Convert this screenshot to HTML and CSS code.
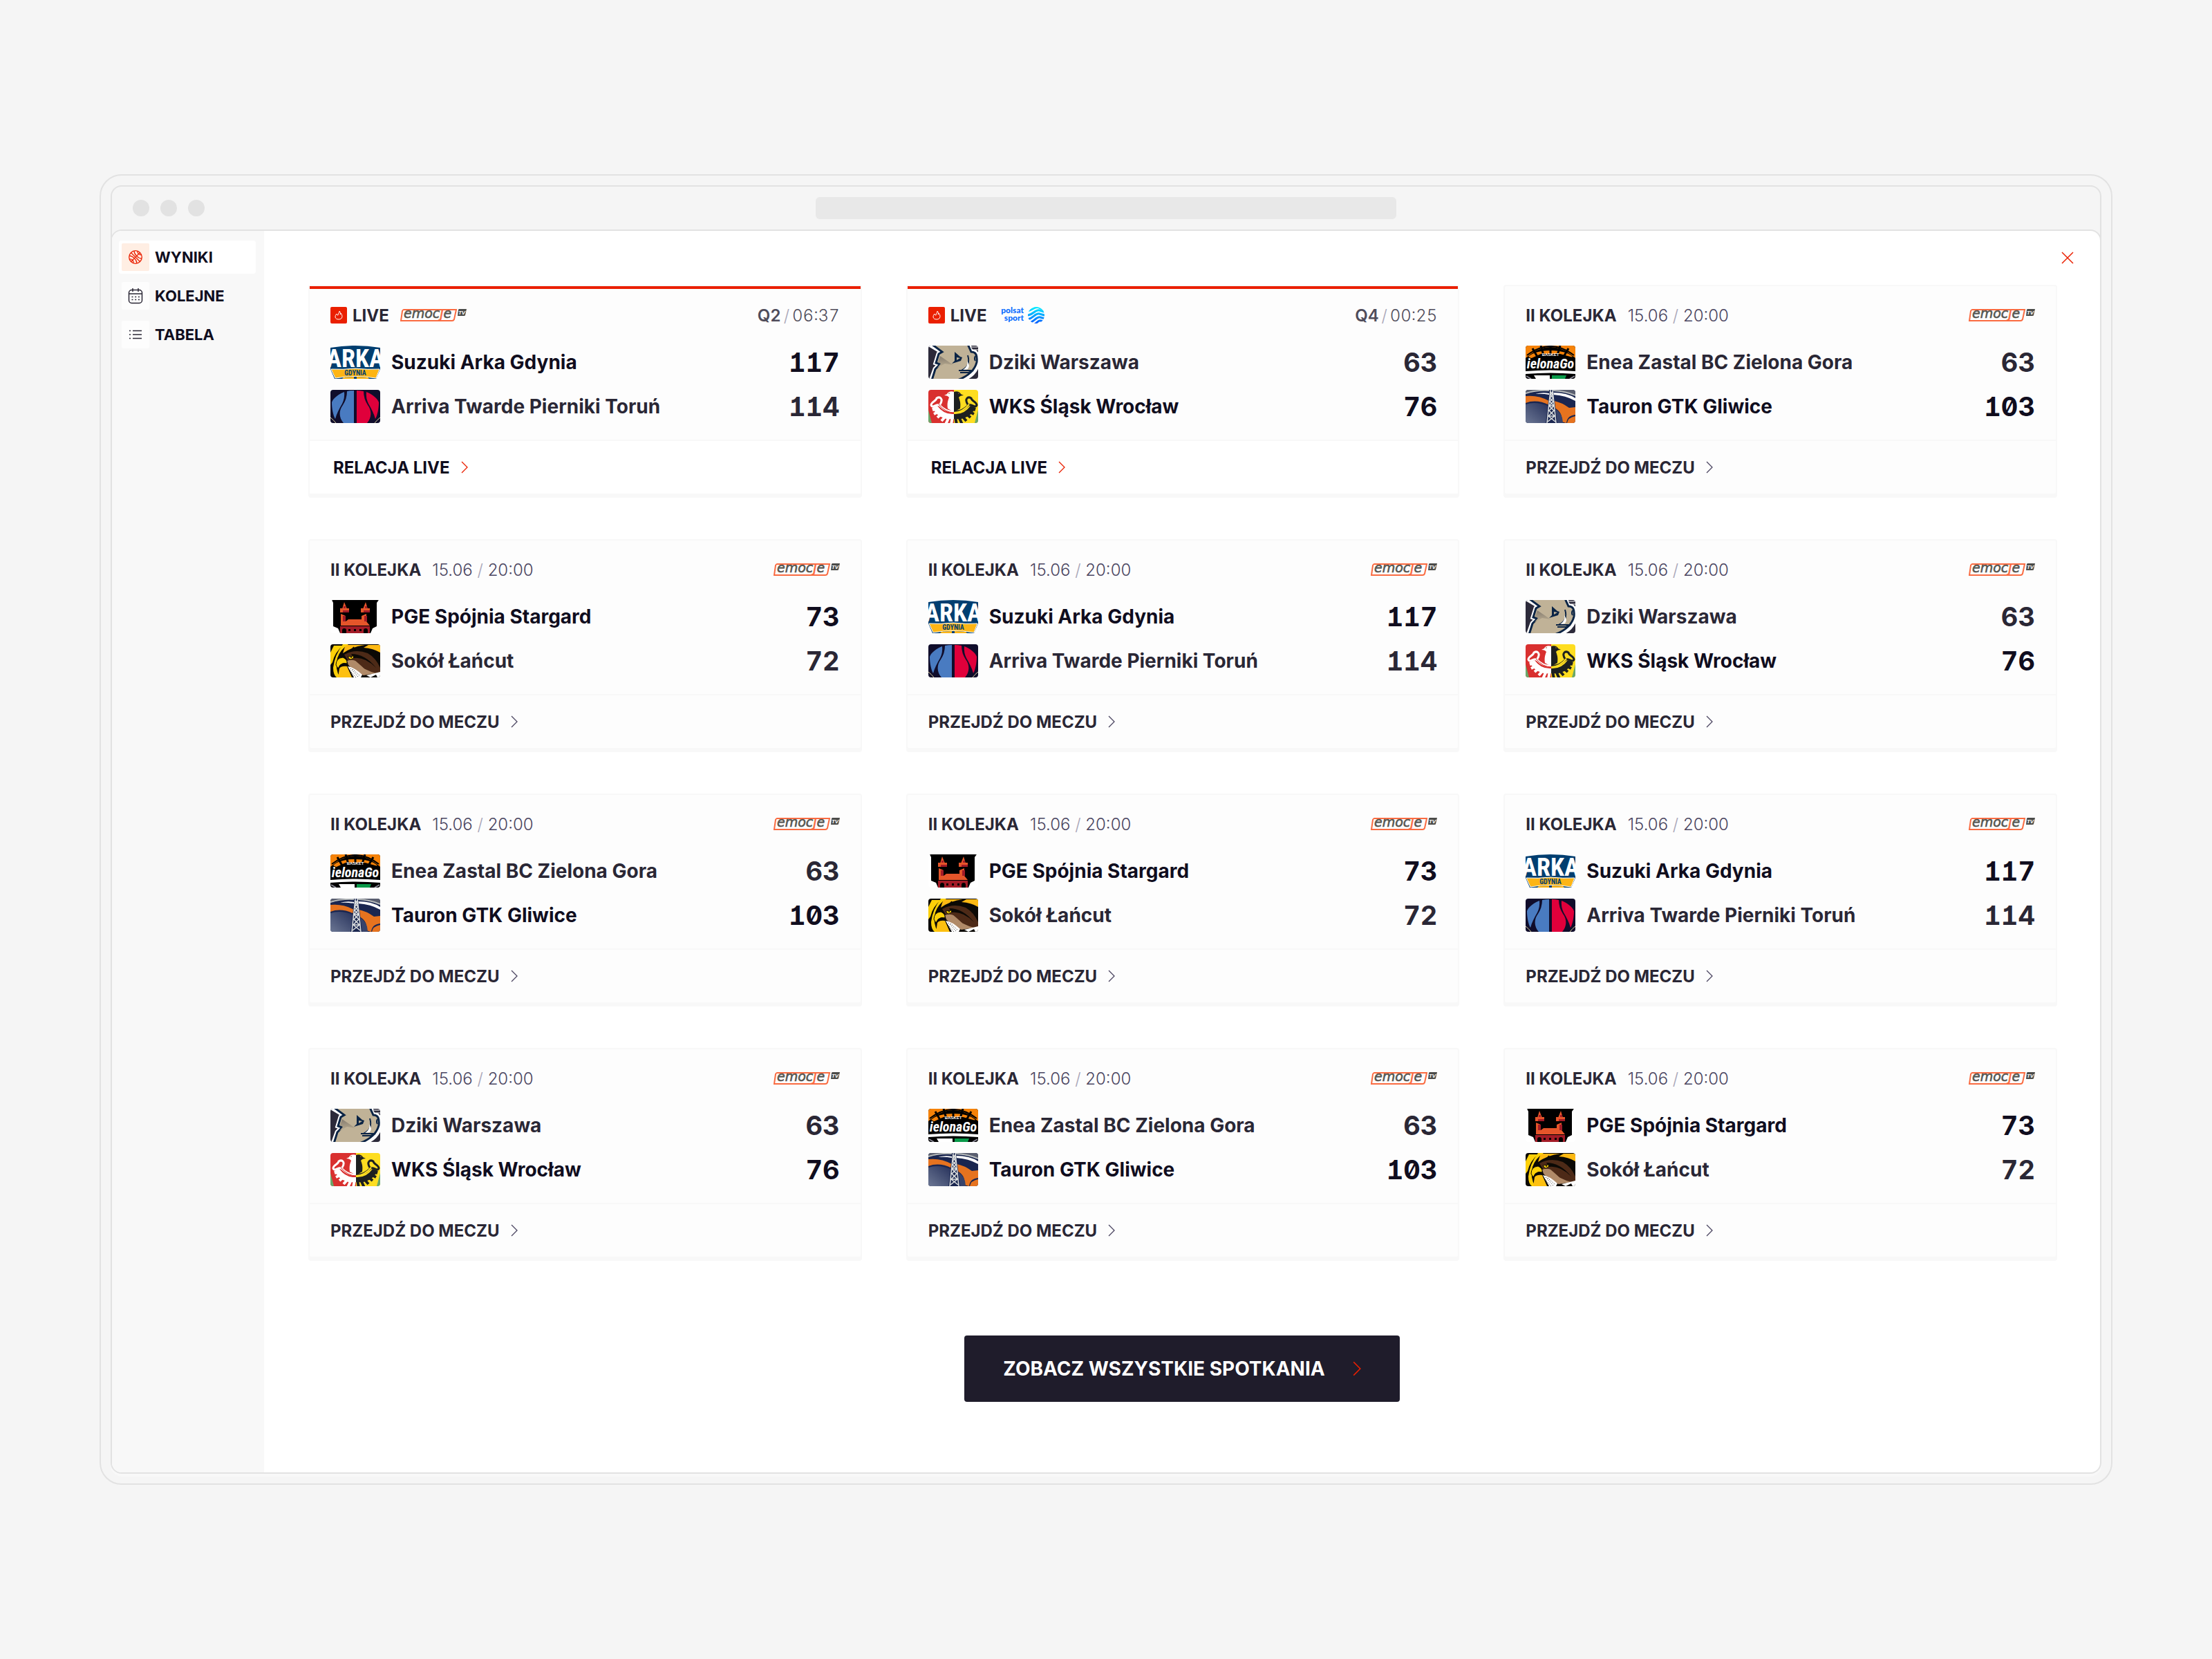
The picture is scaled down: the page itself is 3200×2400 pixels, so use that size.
FILE: index.html
```html
<!DOCTYPE html>
<html lang="pl">
<head>
    <meta charset="UTF-8">
    <meta name="viewport" content="width=device-width, initial-scale=1.0">
    <link rel="stylesheet" href="styles.css">
    <title>Wyniki</title>
</head>
<body>
    <!-- Shared drawings: team crests and broadcaster logos -->
    <svg class="sprite" aria-hidden="true">
      <defs>
        <linearGradient id="fur-shade" x1="0" y1="0" x2="0" y2="1">
          <stop offset="0" stop-color="#857c70"/>
          <stop offset="1" stop-color="#bcae92"/>
        </linearGradient>
        <linearGradient id="steel" x1="1" y1="0" x2="0" y2="1">
          <stop offset="0" stop-color="#25305a"/>
          <stop offset="1" stop-color="#6b7693"/>
        </linearGradient>
        <linearGradient id="globe" x1="0" y1="0" x2="0" y2="24" gradientUnits="userSpaceOnUse">
          <stop offset="0" stop-color="#00f0ff"/>
          <stop offset="1" stop-color="#0a5cff"/>
        </linearGradient>
        <clipPath id="globe-clip"><circle cx="56" cy="12" r="12"/></clipPath>
        <g id="wks-wing">
          <path d="M37 3C33 1 28 3 27 6L23 8Q28 8 30 11C28 16 27 20 28 27L37 32Z"/>
          <path d="M17 21C22 13 17 9 12 12C12 16 4 17 4 22C6 28 13 18 17 23C23 29 30 32 37 31" fill="none" stroke="currentColor" stroke-width="3"/>
          <path d="M5 26L13 23Q22 36 37 35V42Q18 44 9 31Z"/>
          <path d="M6 29L12 27M8 35L16 31M13 40L20 34M19 45L25 38M25 50L30 39M33 50L35 39" stroke="currentColor" stroke-width="4"/>
        </g>
      </defs>

      <symbol id="arka" viewBox="0 0 72 48">
        <rect width="72" height="48" fill="#fff"/>
        <path d="M0 3Q36-3 72 3V34L66 48H6L0 34Z" fill="#003e70"/>
        <text class="crest-arka" x="36" y="31" fill="#fff">ARKA</text>
        <path d="M1 34Q18 35 36 33Q54 35 71 34L66 47Q36 42 7 47Z" fill="#fdb515" stroke="#fff" stroke-width="1"/>
        <path d="M17 48L19 46 34 45V48ZM38 48V45L54 46 56 48Z" fill="#fdb515"/>
        <text class="crest-gdynia" x="36" y="43" fill="#003e70">GDYNIA</text>
      </symbol>

      <symbol id="arriva" viewBox="0 0 72 48">
        <rect width="72" height="48" fill="#100d2b"/>
        <g fill="#497bc1">
          <path d="M20 3C12 6 4 12 2 18C2 27 4 37 7 42C9 34 13 27 17 20Q21 12 20 3Z"/>
          <path d="M24 2Q29 1 34 1V48H19C12 40 12 30 18 22Q24 13 24 2Z"/>
        </g>
        <g fill="#e0003b">
          <path d="M52 3C60 6 68 12 70 18C70 27 68 37 65 42C63 34 59 27 55 20Q51 12 52 3Z"/>
          <path d="M48 2Q43 1 38 1V48H53C60 40 60 30 54 22Q48 13 48 2Z"/>
        </g>
        <path d="M0 40Q4 43 8 48M72 40Q68 43 64 48" fill="none" stroke="#d9cf9b" stroke-width="1"/>
      </symbol>

      <symbol id="dziki" viewBox="0 0 72 48">
        <rect width="72" height="48" fill="#2c2a3a"/>
        <path d="M5 0L20 9 15 12 11 25 17 27 10 34 5 48H48C60 46 70 36 71 24C72 14 69 8 62 8L58 0Z" fill="#fff" stroke="#fff" stroke-width="7"/>
        <path d="M5-2L20 9 15 12 11 25 17 27 10 34 5 50H42C58 44 67 36 70 24C71 14 69 9 62 9L57-2Z" fill="#c0b297" stroke="#0b2445" stroke-width="3"/>
        <path d="M17 15L36 28 24 26 13 32 18 26 14 24Z" fill="url(#fur-shade)"/>
        <path d="M38 9L46 16 49 17 47 22 34 26 38 22Z" fill="#0b2445"/>
        <path d="M41 17L46 18 41 21Z" fill="#c0b297"/>
        <path d="M57 14C60 24 58 31 48 36H44M48 36H65L58 39H46M68 15Q66 19 68 22" fill="none" stroke="#0b2445" stroke-width="2"/>
        <path d="M56 22Q58 30 50 35L57 34Q61 29 56 22Z" fill="#fff"/>
        <path d="M61 2H74V6H64Z" fill="#2c2a3a" stroke="#fff" stroke-width="1"/>
      </symbol>

      <symbol id="wks" viewBox="0 0 72 48">
        <rect width="37" height="48" fill="#d9302f"/>
        <rect x="37" width="35" height="48" fill="#fedd20"/>
        <path d="M0 29L5 48H0ZM72 29L67 48H72Z" fill="#6aa86a"/>
        <g fill="#fff" color="#fff"><use href="#wks-wing"/></g>
        <g fill="#1d2020" color="#1d2020" transform="translate(74 0) scale(-1 1)"><use href="#wks-wing"/></g>
        <path d="M15 21Q25 33 37 33" fill="none" stroke="#d9302f" stroke-width="1"/>
        <path d="M37 33Q49 33 59 21" fill="none" stroke="#fedd20" stroke-width="2"/>
        <path d="M29 5H31M43 5H45" stroke="#a06a30" stroke-width="1"/>
      </symbol>

      <symbol id="zastal" viewBox="0 0 72 48">
        <rect width="72" height="48" fill="#000"/>
        <path d="M0 18V0H72V18Q36-14 0 18Z" fill="#f58208"/>
        <path d="M4 16C16 4 56 4 68 16L60 20H12Z" fill="#f58208"/>
        <path d="M2 14Q36-12 70 14" fill="none" stroke="#000" stroke-width="2"/>
        <path d="M10 4L17 16M22 0L26 14M36 0V14M50 0L46 14M62 4L55 16" stroke="#000" stroke-width="3"/>
        <path d="M0 22L22 12H50L72 18V36H0Z" fill="#000"/>
        <text class="crest-basket" x="36" y="15" fill="#fff">BASKET</text>
        <text class="crest-zielona" x="36" y="33" fill="#fff">ielonaGo</text>
        <path d="M0 37Q36 34 72 37V41Q36 38 0 41Z" fill="#fff"/>
        <path d="M12 43H35V48H15Z" fill="#fff"/>
        <path d="M38 43H59L57 48H38Z" fill="#0a9a4a"/>
        <path d="M1 44L8 48M71 44L64 48" stroke="#8a8896" stroke-width="2"/>
      </symbol>

      <symbol id="gtk" viewBox="0 0 72 48">
        <rect width="72" height="48" fill="#1a2650"/>
        <path d="M0 0H34Q14 1 0 6ZM72 0H38Q58 1 72 8Z" fill="#5a5f70"/>
        <path d="M0 5Q16 0 34 1M40 1Q58 2 72 8" fill="none" stroke="#b8bcbc" stroke-width="2"/>
        <path d="M14 6Q24 3 34 5V7Q24 5 14 6ZM40 4Q60 4 72 12V16Q58 8 40 7Z" fill="#fff"/>
        <path d="M0 9Q18 7 34 16V22Q16 13 0 19Z" fill="#e6731f"/>
        <path d="M0 21Q16 16 34 24V48H0Z" fill="url(#steel)"/>
        <path d="M41 16Q52 18 63 26L72 25V36Q60 37 59 48L52 46C54 38 50 30 42 26Z" fill="#e6731f"/>
        <path d="M42 27Q54 34 54 48H42Z" fill="#38436a"/>
        <path d="M60 48Q61 40 72 38V48Z" fill="#e6731f"/>
        <path d="M35 0H40L46 48H29Z" fill="#1a2650"/>
        <path d="M36 0L31 48M39 0L44 48M36 3L39 7 35 12 40 17 34 23 41 30 33 38 43 46M39 3L36 7 40 12 35 17 41 23 34 30 42 38 32 46M34 23H41M33 38H42" fill="none" stroke="#dde0e0" stroke-width="1.5"/>
      </symbol>

      <symbol id="spojnia" viewBox="0 0 72 48">
        <rect width="72" height="48" fill="#fff"/>
        <path d="M2 0H70L67 4V38L61 41 58 48H14L11 41 4 38V4Z" fill="#000"/>
        <path d="M20 3L24 13H17ZM51 3L54 13H47ZM14 12H27V18H14ZM44 12H57V18H44ZM15 20L22 23V31L26 28H45V23L52 20V31L57 37H15Z" fill="#e5552a"/>
        <path d="M18 15H27V18H18ZM48 15H57V18H48ZM18 23H22V31H18ZM49 23H53V31H49ZM14 38H57V48H14Z" fill="#a31b27"/>
        <path d="M17 48V44A3 3 0 0 1 23 44V48ZM26 45V42H29V45ZM34 45V42H37V45ZM42 45V42H45V45ZM48 48V44A3 3 0 0 1 54 44V48Z" fill="#000"/>
        <path d="M19 9H22V12H19ZM50 9H53V12H50Z" fill="#a31b27"/>
      </symbol>

      <symbol id="sokol" viewBox="0 0 72 48">
        <rect width="72" height="48" fill="#0b0905"/>
        <path d="M5 2H18Q6 12 3 26L0 30V12Z" fill="#fdd008"/>
        <path d="M22 1H50Q32 3 18 13Q20 6 22 1ZM55 1H72V12Q62 6 48 5Z" fill="#fdb913"/>
        <path d="M18 0Q6 16 4 34Q4 44 9 48H14Q6 36 10 20Q14 8 26 0Z" fill="#fdd008"/>
        <path d="M34 4L31 8M46 2L44 7" stroke="#0b0905" stroke-width="2"/>
        <path d="M20 15Q36 6 54 13Q66 20 72 34V46L60 42Q40 38 28 28Z" fill="#4d2a17"/>
        <path d="M24 24Q36 20 44 30Q50 38 66 42L48 45Q34 40 26 30Z" fill="#b08a68"/>
        <path d="M34 22Q50 20 60 38L50 36Z" fill="#4d2a17"/>
        <path d="M30 14Q50 14 66 34Q50 18 34 20Z" fill="#0b0905"/>
        <path d="M8 30Q8 20 18 19Q25 22 24 28Q18 26 14 30L11 35Z" fill="#fdd008" stroke="#0b0905" stroke-width="1"/>
        <path d="M13 35Q16 31 24 32L31 48H11Z" fill="#fdc010"/>
        <path d="M25 32Q34 33 46 44L44 48H34Z" fill="#fff"/>
        <path d="M29 35L40 47M32 36L43 46M28 38L37 48" stroke="#0b0905" stroke-width="1" stroke-dasharray="1 2"/>
        <path d="M52 45L72 40V48H68L66 44 58 48Z" fill="#fff"/>
        <path d="M25 18L34 17Q33 22 28 22Z" fill="#fdd008" stroke="#0b0905" stroke-width="1"/>
        <circle cx="30" cy="19" r="1" fill="#0b0905"/>
      </symbol>

      <symbol id="emocje" viewBox="0 0 96 18">
        <path d="M5 1H81L78 15Q77 17 75 17H1L3 3Q4 1 5 1Z" fill="none" stroke="#fa6b41" stroke-width="2"/>
        <text class="logo-emocje" x="5" y="13" fill="#555550" stroke="#555550">emoc<tspan fill="#fa6b41" stroke="#fa6b41">j</tspan>e</text>
        <path d="M85 0H96L94 9Q94 10 92 10H83L84 1Z" fill="#4b4b49"/>
        <text class="logo-tv" x="89" y="8" fill="#fff">TV</text>
      </symbol>

      <symbol id="polsat" viewBox="0 0 68 24">
        <g class="logo-polsat" fill="#0a6cff">
          <text x="38" y="9">polsat</text>
          <text x="38" y="20">sport</text>
        </g>
        <g clip-path="url(#globe-clip)" fill="none" stroke="url(#globe)" stroke-width="3">
          <path d="M42 6C50 6 54-2 60 1S68 5 72 1"/>
          <path d="M42 12C51 13 54 3 61 5S68 8 72 5"/>
          <path d="M42 18C52 18 54 8 61 10S68 13 72 10"/>
          <path d="M44 23C53 23 56 13 62 15S68 17 72 14"/>
          <path d="M48 27C56 27 58 18 63 20S68 21 72 19"/>
        </g>
      </symbol>

      <symbol id="chevron" viewBox="0 0 10 18">
        <path d="M1 1L9 9 1 17" fill="none" stroke="currentColor" stroke-width="1.3"/>
      </symbol>

      <symbol id="flame" viewBox="0 0 24 24">
        <path d="M13 6C13 9 11 9 11 12C10 12 9 11 9 10C6 13 6 18 12 18C18 18 18 12 15 9C15 10 15 11 14 11C15 9 14 7 13 6Z" fill="none" stroke="#fff" stroke-width="1" stroke-linejoin="round"/>
      </symbol>
    </svg>

    <div class="frame">
      <div class="window">
        <div class="titlebar">
          <div class="dots">
            <span class="dot"></span>
            <span class="dot"></span>
            <span class="dot"></span>
          </div>
          <div class="address"></div>
        </div>

        <div class="panel">
          <nav class="sidebar">
            <a class="nav-item active" href="#wyniki">
              <span class="nav-icon">
                <svg width="22" height="22" viewBox="0 0 22 22" fill="none" stroke="currentColor" stroke-width="1.3">
                  <circle cx="11" cy="11" r="9.3"/>
                  <path d="M4.500 4.500L17.500 17.500M17.500 4.500L4.500 17.500M9 2C9 7 15 13 20 13M2 9C7 9 13 15 13 20M14 2C13 5 16 8 20 8M2 14C6 13 9 16 8 20"/>
                </svg>
              </span>
              WYNIKI
            </a>
            <a class="nav-item" href="#kolejne">
              <span class="nav-icon">
                <svg width="22" height="24" viewBox="0 0 22 24" fill="none" stroke="currentColor" stroke-width="1.5">
                  <rect x="1.5" y="3.5" width="19" height="19" rx="4"/>
                  <path d="M1.500 9H20.500M7 1V6M15 1V6"/>
                  <path d="M5.500 13.500H17M5.500 17.500H17" stroke-dasharray="2 2.700"/>
                </svg>
              </span>
              KOLEJNE
            </a>
            <a class="nav-item" href="#tabela">
              <span class="nav-icon">
                <svg width="18" height="16" viewBox="0 0 18 16" fill="none" stroke="currentColor" stroke-width="1.5">
                  <path d="M0 2.500H2M5 2.500H18M0 8H2M5 8H18M0 13.500H2M5 13.500H18"/>
                </svg>
              </span>
              TABELA
            </a>
          </nav>

          <main class="main">
            <div class="toolbar">
              <button class="close" type="button" aria-label="Zamknij">
                <svg width="18" height="18" viewBox="0 0 18 18" fill="none" stroke="currentColor" stroke-width="1.5">
                  <path d="M1 1L17 17M17 1L1 17"/>
                </svg>
              </button>
            </div>
            <div class="matches" id="matches">
              <!-- Matches will be populated here -->
            </div>
            <button class="show-all" type="button">
              ZOBACZ WSZYSTKIE SPOTKANIA
              <svg width="12" height="22"><use href="#chevron"/></svg>
            </button>
          </main>
        </div>
      </div>
    </div>

    <script>
const arka = { home: ["arka", "Suzuki Arka Gdynia", 117], away: ["arriva", "Arriva Twarde Pierniki Toruń", 114] };
const dziki = { home: ["dziki", "Dziki Warszawa", 63], away: ["wks", "WKS Śląsk Wrocław", 76] };
const zastal = { home: ["zastal", "Enea Zastal BC Zielona Gora", 63], away: ["gtk", "Tauron GTK Gliwice", 103] };
const spojnia = { home: ["spojnia", "PGE Spójnia Stargard", 73], away: ["sokol", "Sokół Łańcut", 72] };

const matches = [
  { ...arka, live: true, tv: "emocje", quarter: "Q2", clock: "06:37" },
  { ...dziki, live: true, tv: "polsat", quarter: "Q4", clock: "00:25" },
  zastal,
  spojnia, arka, dziki,
  zastal, spojnia, arka,
  dziki, zastal, spojnia,
];

const teamRow = ([crest, name, score], won) => `
  <div class="team ${won ? "won" : ""}">
    <svg class="crest" viewBox="0 0 72 48"><use href="#${crest}"/></svg>
    <span class="team-name">${name}</span>
    <span class="score">${score}</span>
  </div>`;

const liveHead = (match) => `
  <svg class="flame"><use href="#flame"/></svg>
  <span class="label live-label">LIVE</span>
  <svg class="tv-${match.tv}"><use href="#${match.tv}"/></svg>
  <span class="clock"><b>${match.quarter}</b><i>/</i>${match.clock}</span>`;

const roundHead = `
  <span class="label">II KOLEJKA</span>
  <span class="date">15.06 <i>/</i> 20:00</span>
  <svg class="tv-emocje push"><use href="#emocje"/></svg>`;

matches.forEach((match) => {
  const card = document.createElement("article");
  const homeWon = match.home[2] > match.away[2];
  card.className = match.live ? "card live" : "card";
  card.innerHTML = `
    <div class="card-body">
      <div class="card-head">${match.live ? liveHead(match) : roundHead}</div>
      <div class="teams">
        ${teamRow(match.home, homeWon)}
        ${teamRow(match.away, !homeWon)}
      </div>
    </div>
    <a class="card-link" href="#mecz">
      ${match.live ? "RELACJA LIVE" : "PRZEJDŹ DO MECZU"}
      <svg width="10" height="18"><use href="#chevron"/></svg>
    </a>`;
  document.getElementById("matches").appendChild(card);
});
    </script>
</body>
</html>
```
FILE: styles.css
```css
* {
  box-sizing: border-box;
}

body {
  margin: 0;
  padding: 252px 144px;
  background-color: #f5f5f5;
  color: #100d1e;
  font-family: Inter, sans-serif;
}

a {
  color: inherit;
  text-decoration: none;
}

button {
  border: none;
  font-family: inherit;
  cursor: pointer;
}

svg {
  display: block;
  flex-shrink: 0;
}

.sprite {
  position: absolute;
  width: 0;
  height: 0;
}

/* Browser window */
.frame {
  padding: 14px;
  border: 2px solid #e2e2e2;
  border-radius: 32px;
}

.window {
  border: 2px solid #e2e2e2;
  border-radius: 16px;
}

.titlebar {
  display: grid;
  grid-template-columns: 1fr 840px 1fr;
  align-items: center;
  height: 62px;
  padding: 0 30px;
}

.dots {
  display: flex;
  gap: 16px;
}

.dot {
  width: 24px;
  height: 24px;
  border-radius: 50%;
  background-color: #e2e2e2;
}

.address {
  height: 32px;
  border-radius: 6px;
  background-color: #e8e8e8;
}

.panel {
  display: flex;
  margin: 0 -2px -2px;
  border: 2px solid #e2e2e2;
  border-radius: 16px;
  background-color: #fff;
  box-shadow: 0 4px 0 #f8f8f8;
  overflow: hidden;
}

/* Sidebar */
.sidebar {
  display: flex;
  flex-direction: column;
  gap: 8px;
  width: 220px;
  padding: 14px 12px 14px 10px;
  background-color: #f8f8f8;
}

.nav-item {
  display: flex;
  align-items: center;
  gap: 8px;
  padding: 4px;
  border-radius: 4px;
  font-size: 22px;
  font-weight: 650;
}

.nav-item.active {
  background-color: #fff;
}

.nav-icon {
  display: flex;
  align-items: center;
  justify-content: center;
  width: 40px;
  height: 40px;
  border-radius: 2px;
  background-color: #fdfdfd;
  color: #2a2735;
}

.active .nav-icon {
  background-color: #ffeee3;
  color: #ea1f00;
}

/* Main */
.main {
  display: flex;
  flex: 1;
  flex-direction: column;
  padding-bottom: 102px;
}

.toolbar {
  display: flex;
  justify-content: flex-end;
  padding: 20px 28px;
}

.close {
  padding: 10px;
  background: none;
  color: #ea1f00;
}

.matches {
  display: grid;
  grid-template-columns: repeat(3, 1fr);
  gap: 64px;
  padding: 0 62px 0 64px;
}

.card {
  border: 2px solid #f8f8f8;
  border-radius: 4px;
  background-color: #fdfdfd;
  box-shadow: 0 4px 0 #f8f8f8;
}

.card-body {
  display: flex;
  flex-direction: column;
  gap: 32px;
  padding: 26px 30px 24px;
  border-top: 4px solid transparent;
  border-bottom: 2px solid #f8f8f8;
}

.live .card-body {
  border-top-color: #ea1f00;
}

.card-head {
  display: flex;
  align-items: center;
  height: 24px;
  gap: 16px;
  font-size: 24px;
}

.card-head i {
  color: #a9a6b8;
  font-style: normal;
}

.label {
  color: #2a2735;
  font-weight: 650;
}

.flame {
  width: 24px;
  height: 24px;
  border-radius: 2px;
  background-color: #ea1f00;
}

.live-label {
  margin-left: -8px;
}

.date {
  color: #4b4661;
  font-weight: 300;
}

.clock {
  margin-left: auto;
  color: #4f4c5a;
  font-weight: 300;
  font-variant-numeric: tabular-nums;
}

.clock b {
  font-weight: 600;
}

.clock i {
  margin: 0 4px;
}

.tv-emocje {
  width: 96px;
  height: 18px;
}

.tv-polsat {
  width: 68px;
  height: 24px;
}

.push {
  margin-left: auto;
}

.teams {
  display: flex;
  flex-direction: column;
  gap: 16px;
}

.team {
  display: flex;
  align-items: center;
  gap: 16px;
  height: 48px;
  color: #2a2735;
  font-size: 28px;
  font-weight: 650;
}

.team.won {
  color: #100d1e;
}

.crest {
  width: 72px;
  height: 48px;
  border-radius: 4px;
}

.score {
  margin-left: auto;
  font-size: 38px;
  font-feature-settings: "tnum", "ss02", "zero" 0, "cv01";
}

.card-link {
  display: flex;
  align-items: center;
  gap: 16px;
  height: 76px;
  padding: 0 30px;
  color: #2a2735;
  font-size: 24px;
  font-weight: 700;
}

.card-link svg {
  color: #4b4661;
}

.live .card-link {
  padding-left: 34px;
  background-color: #fff;
  color: #100d1e;
}

.live .card-link svg {
  color: #ea1f00;
}

.show-all {
  display: flex;
  align-items: center;
  align-self: center;
  gap: 40px;
  height: 96px;
  margin-top: 112px;
  padding: 0 56px;
  border-radius: 4px;
  background-color: #1f1c2b;
  color: #fff;
  font-size: 28px;
  font-weight: 700;
}

.show-all svg {
  color: #ea1f00;
}

/* Lettering inside the crests and logos */
.crest-arka {
  font: bold 36px "Roboto Condensed", Roboto, sans-serif;
  text-anchor: middle;
}

.crest-gdynia {
  font: bold 10px "Roboto Condensed", Roboto, sans-serif;
  text-anchor: middle;
}

.crest-basket {
  font: bold 6px "Liberation Sans", sans-serif;
  text-anchor: middle;
}

.crest-zielona {
  font: italic bold 20px "Roboto Condensed", Roboto, sans-serif;
  text-anchor: middle;
}

.logo-emocje {
  font: italic 19px "DejaVu Sans", sans-serif;
  stroke-width: 0.6px;
}

.logo-tv {
  font: italic bold 8px "Liberation Sans", sans-serif;
  text-anchor: middle;
}

.logo-polsat {
  font: 900 12px Lato, sans-serif;
  text-anchor: end;
}
```
